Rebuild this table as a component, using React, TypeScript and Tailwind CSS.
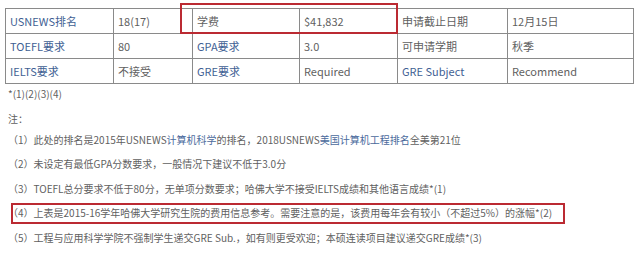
const font = { fontFamily: '"Noto Sans CJK SC", "Noto Sans", sans-serif' }

type Cell = { text: string; blue?: boolean }

const rows: Cell[][] = [
  [
    { text: 'USNEWS排名', blue: true },
    { text: '18(17)' },
    { text: '学费' },
    { text: '$41,832' },
    { text: '申请截止日期' },
    { text: '12月15日' },
  ],
  [
    { text: 'TOEFL要求', blue: true },
    { text: '80' },
    { text: 'GPA要求', blue: true },
    { text: '3.0' },
    { text: '可申请学期' },
    { text: '秋季' },
  ],
  [
    { text: 'IELTS要求', blue: true },
    { text: '不接受' },
    { text: 'GRE要求', blue: true },
    { text: 'Required' },
    { text: 'GRE Subject', blue: true },
    { text: 'Recommend' },
  ],
]

const widths = ['w-[108px]', 'w-[79px]', 'w-[107px]', 'w-[98px]', 'w-[110px]', 'w-[126px]']

export default function App() {
  return (
    <div className="w-[634px] h-[254px] bg-white text-[#5f5f5f] overflow-hidden" style={font}>
      <div className="relative pt-[8px] pl-[5px]">
        <table className="border-collapse text-[11px]">
          <tbody>
            {rows.map((row, i) => (
              <tr key={i} className="h-[25px]">
                {row.map((c, j) => (
                  <td
                    key={j}
                    className={`${widths[j]} border border-[#8a8a8a] pl-[4px] align-middle leading-none ${c.blue ? 'text-[#3f5f94]' : ''}`}
                  >
                    {c.text}
                  </td>
                ))}
              </tr>
            ))}
          </tbody>
        </table>
        <div className="absolute left-[180px] top-[3px] w-[218px] h-[31px] border-2 border-[#bb2a32]" />
      </div>

      <div className="pl-[8px] text-[10px] leading-[24px] mt-[-2px] whitespace-nowrap">
        <div className="h-[25px]">*(1)(2)(3)(4)</div>
        <div className="h-[21px]">注：</div>
        <div className="h-[24px]">
          （1）此处的排名是2015年USNEWS<span className="text-[#4a6a9c]">计算机科学</span>的排名，2018USNEWS
          <span className="text-[#4a6a9c]">美国计算机工程排名</span>全美第21位
        </div>
        <div className="h-[25px]">（2）未设定有最低GPA分数要求，一般情况下建议不低于3.0分</div>
        <div className="h-[24px]">（3）TOEFL总分要求不低于80分，无单项分数要求；哈佛大学不接受IELTS成绩和其他语言成绩*(1)</div>
        <div className="relative h-[25px]">
          （4）上表是2015-16学年哈佛大学研究生院的费用信息参考。需要注意的是，该费用每年会有较小（不超过5%）的涨幅*(2)
          <div className="absolute left-[3px] top-[2px] w-[554px] h-[21px] border-2 border-[#bb2a32]" />
        </div>
        <div className="h-[25px]">（5）工程与应用科学学院不强制学生递交GRE Sub.，如有则更受欢迎；本硕连读项目建议递交GRE成绩*(3)</div>
      </div>
    </div>
  )
}
